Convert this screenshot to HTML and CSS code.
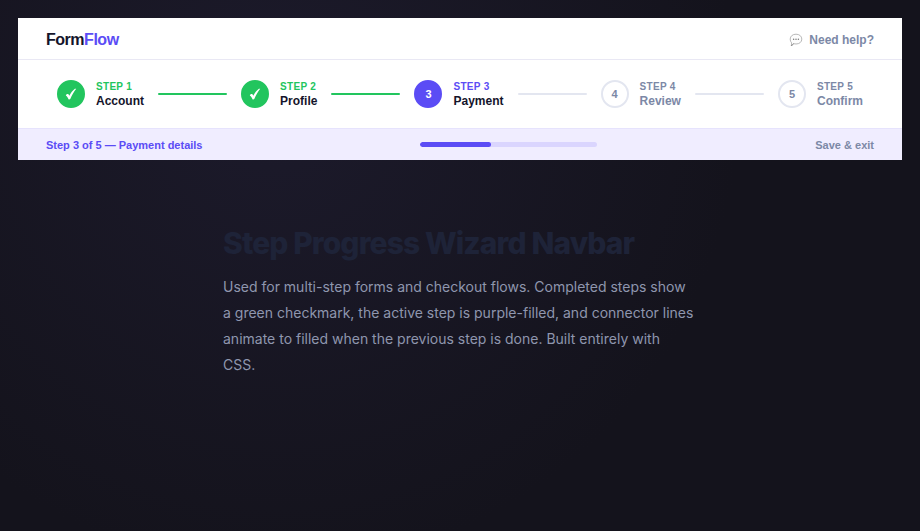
FILE: index.html
```html
<!DOCTYPE html>
<html lang="en">
<head>
    <meta charset="UTF-8">
    <meta name="viewport" content="width=device-width, initial-scale=1.0">
    <title>Step Progress Wizard Navbar</title>
    <link rel="stylesheet" href="styles.css">
</head>
<body>
<header class="navbar">
    <div class="nav-top">
        <a class="logo" href="#">Form<span>Flow</span></a>
        <a class="help" href="#">
            <svg class="help-icon" viewBox="0 0 14 14" aria-hidden="true">
                <path d="M7 1.2c3.4 0 5.8 2 5.8 4.9S10.4 11 7 11c-.8 0-1.6-.1-2.3-.3-.7.8-1.6 1.5-2.6 1.800.4-.8.6-1.7.5-2.6C1.7 9 1.2 7.700 1.2 6.100 1.2 3.200 3.600 1.2 7 1.2z" fill="#fdfdfd" stroke="#b0b0b0" stroke-width=".9"/>
                <path d="M2.1 12.5c1-.3 1.9-1 2.6-1.8" fill="none" stroke="#777" stroke-width=".9"/>
                <circle cx="4.6" cy="6.2" r=".75" fill="#777"/>
                <circle cx="7" cy="6.2" r=".75" fill="#777"/>
                <circle cx="9.4" cy="6.2" r=".75" fill="#777"/>
            </svg>
            Need help?
        </a>
    </div>

    <ol class="steps">
        <li class="step done">
            <span class="circle">
                <svg viewBox="0 0 12 12" aria-hidden="true"><path d="M.8 7.4C1.3 6.5 2 6.1 2.6 6.1c.8 0 1.3.6 1.7 1.6C5.8 4.7 7.6 2.4 9.9.7h1.3C8.900 3.600 7 6.900 5.400 10.800c-.3.6-1.500.9-1.900.4C3 9.700 2.200 8.400.8 7.400z"/></svg>
            </span>
            <span class="label"><small>STEP 1</small><b>Account</b></span>
        </li>
        <li class="step done">
            <span class="circle">
                <svg viewBox="0 0 12 12" aria-hidden="true"><path d="M.8 7.4C1.3 6.5 2 6.1 2.6 6.1c.8 0 1.3.6 1.7 1.6C5.8 4.7 7.6 2.4 9.9.7h1.3C8.900 3.600 7 6.900 5.400 10.800c-.3.6-1.500.9-1.900.4C3 9.700 2.200 8.400.8 7.400z"/></svg>
            </span>
            <span class="label"><small>STEP 2</small><b>Profile</b></span>
        </li>
        <li class="step active" aria-current="step">
            <span class="circle">3</span>
            <span class="label"><small>STEP 3</small><b>Payment</b></span>
        </li>
        <li class="step">
            <span class="circle">4</span>
            <span class="label"><small>STEP 4</small><b>Review</b></span>
        </li>
        <li class="step">
            <span class="circle">5</span>
            <span class="label"><small>STEP 5</small><b>Confirm</b></span>
        </li>
    </ol>

    <div class="nav-bottom">
        <label class="status" for="progress">Step 3 of 5 — Payment details</label>
        <progress class="bar" id="progress" value="40" max="100"></progress>
        <button class="save" type="button">Save &amp; exit</button>
    </div>
</header>

<main class="content">
    <h1>Step Progress Wizard Navbar</h1>
    <p>Used for multi-step forms and checkout flows. Completed steps show a green checkmark, the active step is purple-filled, and connector lines animate to filled when the previous step is done. Built entirely with CSS.</p>
</main>
</body>
</html>
```
FILE: styles.css
```css
* {
    margin: 0;
    padding: 0;
    box-sizing: border-box;
}

body {
    min-height: 100vh;
    padding: 18px;
    background: #14131c radial-gradient(circle at 30% 20%, #1c1a2b 0%, #14131c 60%) no-repeat;
    font-family: Inter, sans-serif;
}

/* navbar */
.navbar {
    background: #fff;
    font-family: "Liberation Sans", Arial, sans-serif;
    font-weight: bold;
}

.nav-top {
    display: flex;
    align-items: center;
    justify-content: space-between;
    height: 42px;
    padding: 2px 28px 0;
    border-bottom: 1px solid #e9e8f4;
}

.logo {
    color: #14142b;
    font-size: 16px;
    letter-spacing: -0.03em;
    text-decoration: none;
}

.logo span {
    color: #5b4cf5;
}

.help {
    display: flex;
    align-items: center;
    gap: 6px;
    color: #7c88a6;
    font-size: 12px;
    text-decoration: none;
}

.help-icon {
    width: 14px;
    height: 14px;
}

/* steps */
.steps {
    display: flex;
    padding: 20px 39px;
    list-style: none;
}

.step {
    display: flex;
    flex: 1 1 auto;
    align-items: center;
    color: #7c88a6;
}

.step:last-child {
    flex: none;
}

.step::after {
    content: "";
    flex: 1;
    height: 2px;
    margin: 0 14px;
    border-radius: 2px;
    background: #e3e6f0;
}

.step:last-child::after {
    display: none;
}

.step.done::after {
    background: #22c55e;
}

.circle {
    display: flex;
    align-items: center;
    justify-content: center;
    width: 28px;
    height: 28px;
    margin-right: 11px;
    border: 2px solid #e3e6f0;
    border-radius: 50%;
    font-size: 11px;
}

.circle svg {
    width: 12px;
    height: 12px;
    fill: #fff;
}

.label small,
.label b {
    display: block;
    line-height: 14px;
}

.label small {
    font-size: 10px;
    letter-spacing: 0.03em;
}

.label b {
    font-size: 12px;
}

.done .circle {
    border-color: #22c55e;
    background: #22c55e;
}

.done small {
    color: #22c55e;
}

.active .circle {
    border-color: #5b4cf5;
    background: #5b4cf5;
    color: #fff;
}

.active small {
    color: #5b4cf5;
}

.done b,
.active b {
    color: #14142b;
}

/* progress strip */
.nav-bottom {
    display: flex;
    align-items: center;
    justify-content: space-between;
    height: 32px;
    padding: 0 28px;
    border-top: 1px solid #e6e3fd;
    background: #f0edff;
    font-size: 11px;
}

.status {
    color: #5b4cf5;
}

.bar {
    width: 177px;
    height: 5px;
    border: 0;
    border-radius: 3px;
    overflow: hidden;
    -webkit-appearance: none;
    appearance: none;
}

.bar::-webkit-progress-bar {
    background: #dad5fe;
}

.bar::-webkit-progress-value {
    border-radius: 3px;
    background: #5b4cf5;
}

.save {
    border: 0;
    background: none;
    color: #7c88a6;
    font: inherit;
    cursor: pointer;
}

/* content */
.content {
    max-width: 474px;
    margin: 64px auto 0;
}

.content h1 {
    color: #1e2338;
    font-size: 30px;
    font-weight: 800;
    line-height: 38px;
    letter-spacing: -0.03em;
}

.content p {
    max-width: 471px;
    margin-top: 12px;
    color: #8f96ae;
    font-size: 14px;
    line-height: 26px;
}
```
